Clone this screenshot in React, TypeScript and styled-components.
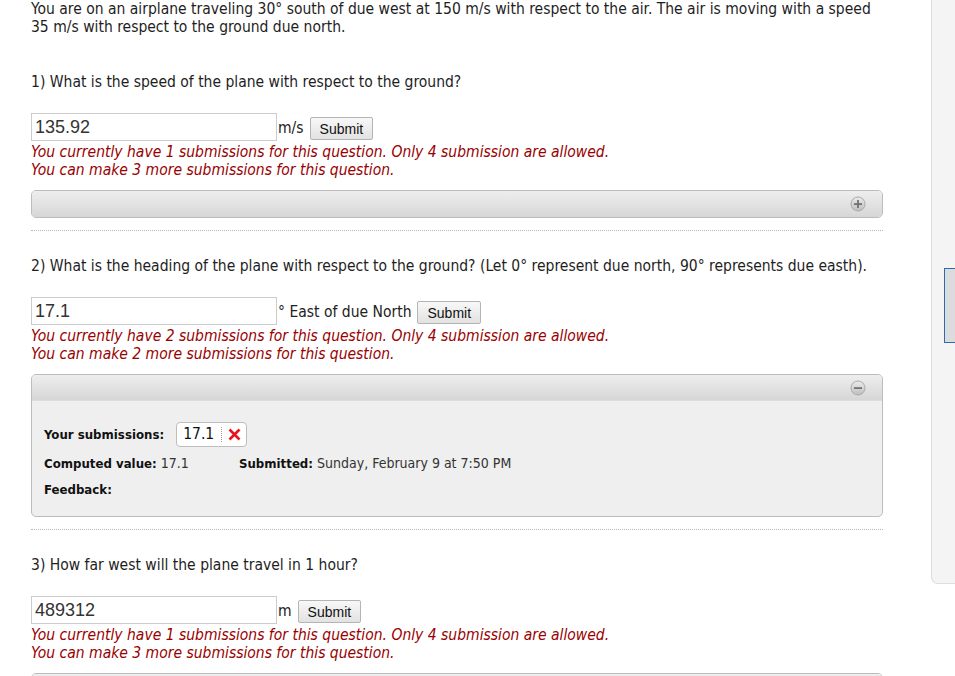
import React from "react";
import styled, { createGlobalStyle } from "styled-components";

const GlobalStyle = createGlobalStyle`
	body {
		margin: 0;
		background: #fff;
		font-family: "DejaVu Sans", Verdana, sans-serif;
		font-stretch: condensed;
		font-size: 15.5px;
		color: #1e1e1e;
	}
`;

interface Submission {
	value: string;
	computed: string;
	submitted: string;
}

interface Question {
	id: number;
	text: string;
	answer: string;
	unit: string;
	count: number;
	open: boolean;
	history?: Submission;
}

const questions: Question[] = [
	{
		id: 1,
		text: "What is the speed of the plane with respect to the ground?",
		answer: "135.92",
		unit: "m/s",
		count: 1,
		open: false,
	},
	{
		id: 2,
		text: "What is the heading of the plane with respect to the ground? (Let 0° represent due north, 90° represents due easth).",
		answer: "17.1",
		unit: "° East of due North",
		count: 2,
		open: true,
		history: {
			value: "17.1",
			computed: "17.1",
			submitted: "Sunday, February 9 at 7:50 PM",
		},
	},
	{
		id: 3,
		text: "How far west will the plane travel in 1 hour?",
		answer: "489312",
		unit: "m",
		count: 1,
		open: false,
	},
];

const ToggleIcon = ({ open }: { open: boolean }) => (
	<svg width="16" height="16" viewBox="0 0 16 16">
		<defs>
			<linearGradient id={open ? "tg-open" : "tg-closed"} x1="0" y1="0" x2="0" y2="1">
				<stop offset="0" stopColor="#ececec" />
				<stop offset="1" stopColor="#bdbdbd" />
			</linearGradient>
		</defs>
		<circle cx="8" cy="8" r="7" fill={`url(#${open ? "tg-open" : "tg-closed"})`} stroke="#aaaaaa" />
		<rect x="4" y="7.2" width="8" height="1.8" fill="#727272" />
		{!open && <rect x="7.1" y="4" width="1.8" height="8" fill="#727272" />}
	</svg>
);

const QuestionBlock = ({ q, last }: { q: Question; last: boolean }) => (
	<Block>
		<QuestionText>
			{q.id}) {q.text}
		</QuestionText>
		<AnswerRow>
			<AnswerInput defaultValue={q.answer} />
			<Unit>{q.unit}</Unit>
			<SubmitButton>Submit</SubmitButton>
		</AnswerRow>
		<Notice>
			You currently have {q.count} submissions for this question. Only 4 submission are allowed.
			<br />
			You can make {4 - q.count} more submissions for this question.
		</Notice>
		<Panel>
			<PanelHeader $open={q.open}>
				<ToggleIcon open={q.open} />
			</PanelHeader>
			{q.open && q.history && (
				<PanelBody>
					<InfoRow>
						<Label>Your submissions:</Label>
						<Badge>
							<BadgeValue>{q.history.value}</BadgeValue>
							<BadgeCross>
								<svg width="13" height="13" viewBox="0 0 13 13">
									<path d="M1.5 1.5 L11.5 11.5 M11.5 1.5 L1.5 11.5" stroke="#e8141b" strokeWidth="2.6" />
								</svg>
							</BadgeCross>
						</Badge>
					</InfoRow>
					<InfoRow>
						<Cell $width={195}>
							<Label>Computed value:</Label> <Value>{q.history.computed}</Value>
						</Cell>
						<Cell>
							<Label>Submitted:</Label> <Value>{q.history.submitted}</Value>
						</Cell>
					</InfoRow>
					<InfoRow>
						<Label>Feedback:</Label>
					</InfoRow>
				</PanelBody>
			)}
		</Panel>
		{!last && <Divider />}
	</Block>
);

const App = () => (
	<Page>
		<GlobalStyle />
		<Main>
			<Intro>
				You are on an airplane traveling 30° south of due west at 150 m/s with respect to the air. The air is moving
				with a speed 35 m/s with respect to the ground due north.
			</Intro>
			{questions.map((q, i) => (
				<QuestionBlock key={q.id} q={q} last={i === questions.length - 1} />
			))}
		</Main>
		<Sidebar>
			<SideTab />
		</Sidebar>
	</Page>
);

const Page = styled.div`
	display: flex;
	align-items: flex-start;
	width: 955px;
	height: 676px;
	overflow: hidden;
`;
const Main = styled.div`
	flex: 0 0 852px;
	width: 852px;
	min-width: 0;
	padding-left: 31px;
	margin-right: 48px;
`;
const Intro = styled.p`
	margin: 0;
	line-height: 18px;
	width: 860px;
`;
const Block = styled.div`
	margin-top: 37px;
	& + & {
		margin-top: 26px;
	}
`;
const QuestionText = styled.p`
	margin: 0;
	line-height: 18px;
	white-space: nowrap;
`;
const AnswerRow = styled.div`
	display: flex;
	align-items: flex-end;
	margin-top: 22px;
	font-family: "Liberation Sans", Arial, sans-serif;
	font-stretch: normal;
`;
const AnswerInput = styled.input`
	box-sizing: border-box;
	width: 246px;
	height: 28px;
	margin: 0;
	padding: 1px 3px 0;
	border: 1px solid #cccccc;
	font-family: "Liberation Sans", Arial, sans-serif;
	font-size: 18px;
	color: #333;
	outline: none;
`;
const Unit = styled.span`
	font-size: 15.5px;
	margin: 0 6px 4px 1px;
	color: #222;
	font-family: "DejaVu Sans", sans-serif;
	font-stretch: condensed;
`;
const SubmitButton = styled.button`
	box-sizing: border-box;
	height: 23px;
	margin-bottom: 1px;
	padding: 0 9px;
	border: 1px solid #b4b4b4;
	border-radius: 2px;
	background: linear-gradient(#f8f8f8, #e2e2e2);
	font-family: "Liberation Sans", Arial, sans-serif;
	font-size: 14px;
	color: #111;
`;
const Notice = styled.p`
	margin: 2px 0 0;
	line-height: 18px;
	font-style: italic;
	color: #990000;
	white-space: nowrap;
`;
const Panel = styled.div`
	margin-top: 11px;
	border: 1px solid #bcbcbc;
	border-radius: 5px;
	overflow: hidden;
	background: #efefef;
`;
const PanelHeader = styled.div<{ $open: boolean }>`
	display: flex;
	justify-content: flex-end;
	align-items: center;
	height: ${(p) => (p.$open ? 25 : 26)}px;
	padding-right: 16px;
	background: linear-gradient(#eeeeee, #d6d6d6);
	border-bottom: ${(p) => (p.$open ? "1px solid #dcdcdc" : "none")};
`;
const PanelBody = styled.div`
	padding: 21px 12px 18px;
	font-size: 14px;
`;
const InfoRow = styled.div`
	display: flex;
	align-items: center;
	min-height: 18px;
	& + & {
		margin-top: 8px;
	}
	&:first-child + & {
		margin-top: 7px;
	}
`;
const Cell = styled.div<{ $width?: number }>`
	width: ${(p) => (p.$width ? `${p.$width}px` : "auto")};
`;
const Label = styled.span`
	font-weight: bold;
	font-size: 13.1px;
	color: #111;
`;
const Value = styled.span`
	color: #333;
`;
const Badge = styled.div`
	display: flex;
	align-items: center;
	height: 23px;
	margin-left: 12px;
	padding: 0 5px 0 6px;
	background: #fff;
	border: 1px solid #bdbdbd;
	border-radius: 4px;
`;
const BadgeValue = styled.span`
	font-size: 15.5px;
	color: #111;
	padding-right: 7px;
	border-right: 1px dotted #999;
	line-height: 15px;
`;
const BadgeCross = styled.span`
	display: flex;
	margin-left: 6px;
`;
const Divider = styled.hr`
	margin: 12px 0 0;
	border: none;
	border-top: 1px dotted #b8b8b8;
	height: 0;
`;
const Sidebar = styled.div`
	box-sizing: border-box;
	flex: 0 0 24px;
	height: 584px;
	padding-top: 268px;
	padding-left: 12px;
	background: #f4f4f4;
	border-left: 1px solid #dedede;
	border-bottom: 1px solid #dedede;
	border-bottom-left-radius: 7px;
`;
const SideTab = styled.div`
	height: 73px;
	background: #dcdcdc;
	border: 1px solid #2e6aac;
	border-right: none;
`;

export default App;
